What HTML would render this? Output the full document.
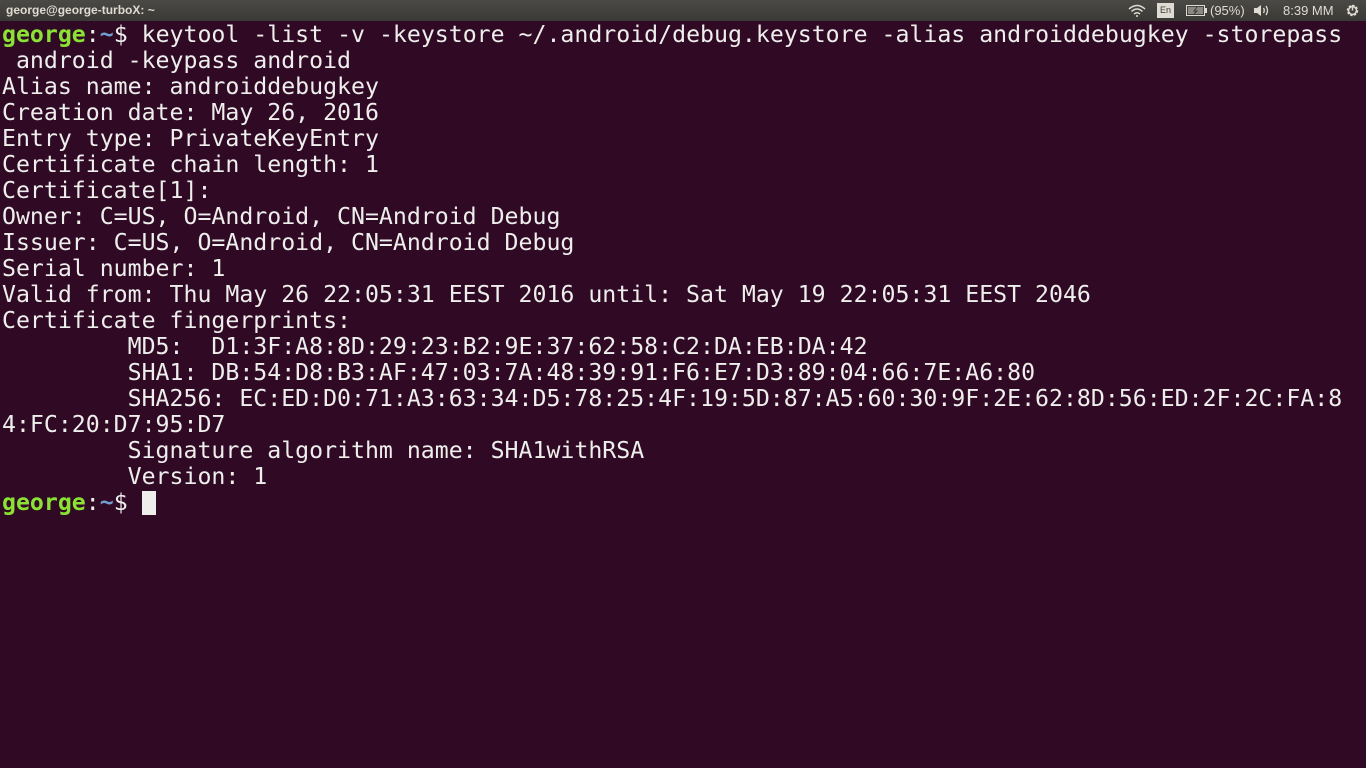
<!DOCTYPE html>
<html><head><meta charset="utf-8"><style>
html,body{margin:0;padding:0;width:1366px;height:768px;overflow:hidden;background:#300a24;}
#bar{position:absolute;left:0;top:0;width:1366px;height:21px;background:linear-gradient(#4a4945,#3a3935);color:#dfdbd2;font:bold 12px "Liberation Sans",sans-serif;}
#bar .t{position:absolute;left:6px;top:3px;}
#bar span{position:absolute;top:3px;font-weight:normal;font-size:13px;}
pre{position:absolute;left:2px;top:22px;margin:0;font-family:"DejaVu Sans Mono",monospace;font-size:23.2px;line-height:26px;color:#eeeeec;white-space:pre;}
.g{color:#8ae234;font-weight:bold}.b{color:#729fcf;font-weight:bold}
.cur{display:inline-block;width:14px;height:24px;background:#eeeeec;vertical-align:-5px;}
</style></head><body>
<div id="bar"><div class="t">george@george-turboX: ~</div>
<svg style="position:absolute;left:1128px;top:4px" width="18" height="13" viewBox="0 0 18 13"><g fill="none" stroke="#dfdbd2" stroke-width="1.5"><path d="M1 5 Q9 -2 17 5"/><path d="M3.5 7.5 Q9 2.5 14.5 7.5"/><path d="M6 10 Q9 7.5 12 10"/></g><circle cx="9" cy="12" r="1" fill="#dfdbd2"/></svg>
<div style="position:absolute;left:1157px;top:3px;width:17px;height:15px;background:#dfdbd2;color:#3c3b37;font:9px 'Liberation Sans',sans-serif;text-align:center;line-height:15px">En</div>
<svg style="position:absolute;left:1186px;top:5px" width="22" height="11"><rect x="0.5" y="0.5" width="18" height="10" fill="none" stroke="#dfdbd2"/><rect x="19" y="3" width="2" height="5" fill="#dfdbd2"/><rect x="2" y="2" width="15" height="7" fill="#8a8883"/><path d="M11 2 L8 6 L11 6 L8 9" stroke="#3c3b37" fill="none"/></svg>
<span style="left:1210px">(95%)</span>
<svg style="position:absolute;left:1253px;top:4px" width="18" height="13" viewBox="0 0 18 13"><path d="M1 4 H4 L8 1 V12 L4 9 H1 Z" fill="#dfdbd2"/><g fill="none" stroke="#dfdbd2" stroke-width="1.3"><path d="M10.5 4 Q12 6.5 10.5 9"/><path d="M13 2 Q16 6.5 13 11"/></g></svg>
<span style="left:1283px">8:39 MM</span>
<svg style="position:absolute;left:1345px;top:3px" width="15" height="15" viewBox="0 0 15 15"><circle cx="7.5" cy="7.5" r="4.5" fill="none" stroke="#dfdbd2" stroke-width="2.5" stroke-dasharray="2 1.5"/><circle cx="7.5" cy="7.5" r="4" fill="none" stroke="#dfdbd2" stroke-width="1.5"/><path d="M7.5 2 V7.5" stroke="#dfdbd2" stroke-width="1.5"/></svg>
</div>
<pre><span class="g">george</span>:<span class="b">~</span>$ keytool -list -v -keystore ~/.android/debug.keystore -alias androiddebugkey -storepass
 android -keypass android
Alias name: androiddebugkey
Creation date: May 26, 2016
Entry type: PrivateKeyEntry
Certificate chain length: 1
Certificate[1]:
Owner: C=US, O=Android, CN=Android Debug
Issuer: C=US, O=Android, CN=Android Debug
Serial number: 1
Valid from: Thu May 26 22:05:31 EEST 2016 until: Sat May 19 22:05:31 EEST 2046
Certificate fingerprints:
         MD5:  D1:3F:A8:8D:29:23:B2:9E:37:62:58:C2:DA:EB:DA:42
         SHA1: DB:54:D8:B3:AF:47:03:7A:48:39:91:F6:E7:D3:89:04:66:7E:A6:80
         SHA256: EC:ED:D0:71:A3:63:34:D5:78:25:4F:19:5D:87:A5:60:30:9F:2E:62:8D:56:ED:2F:2C:FA:8
4:FC:20:D7:95:D7
         Signature algorithm name: SHA1withRSA
         Version: 1
<span class="g">george</span>:<span class="b">~</span>$ <span class="cur"></span></pre>
</body></html>
